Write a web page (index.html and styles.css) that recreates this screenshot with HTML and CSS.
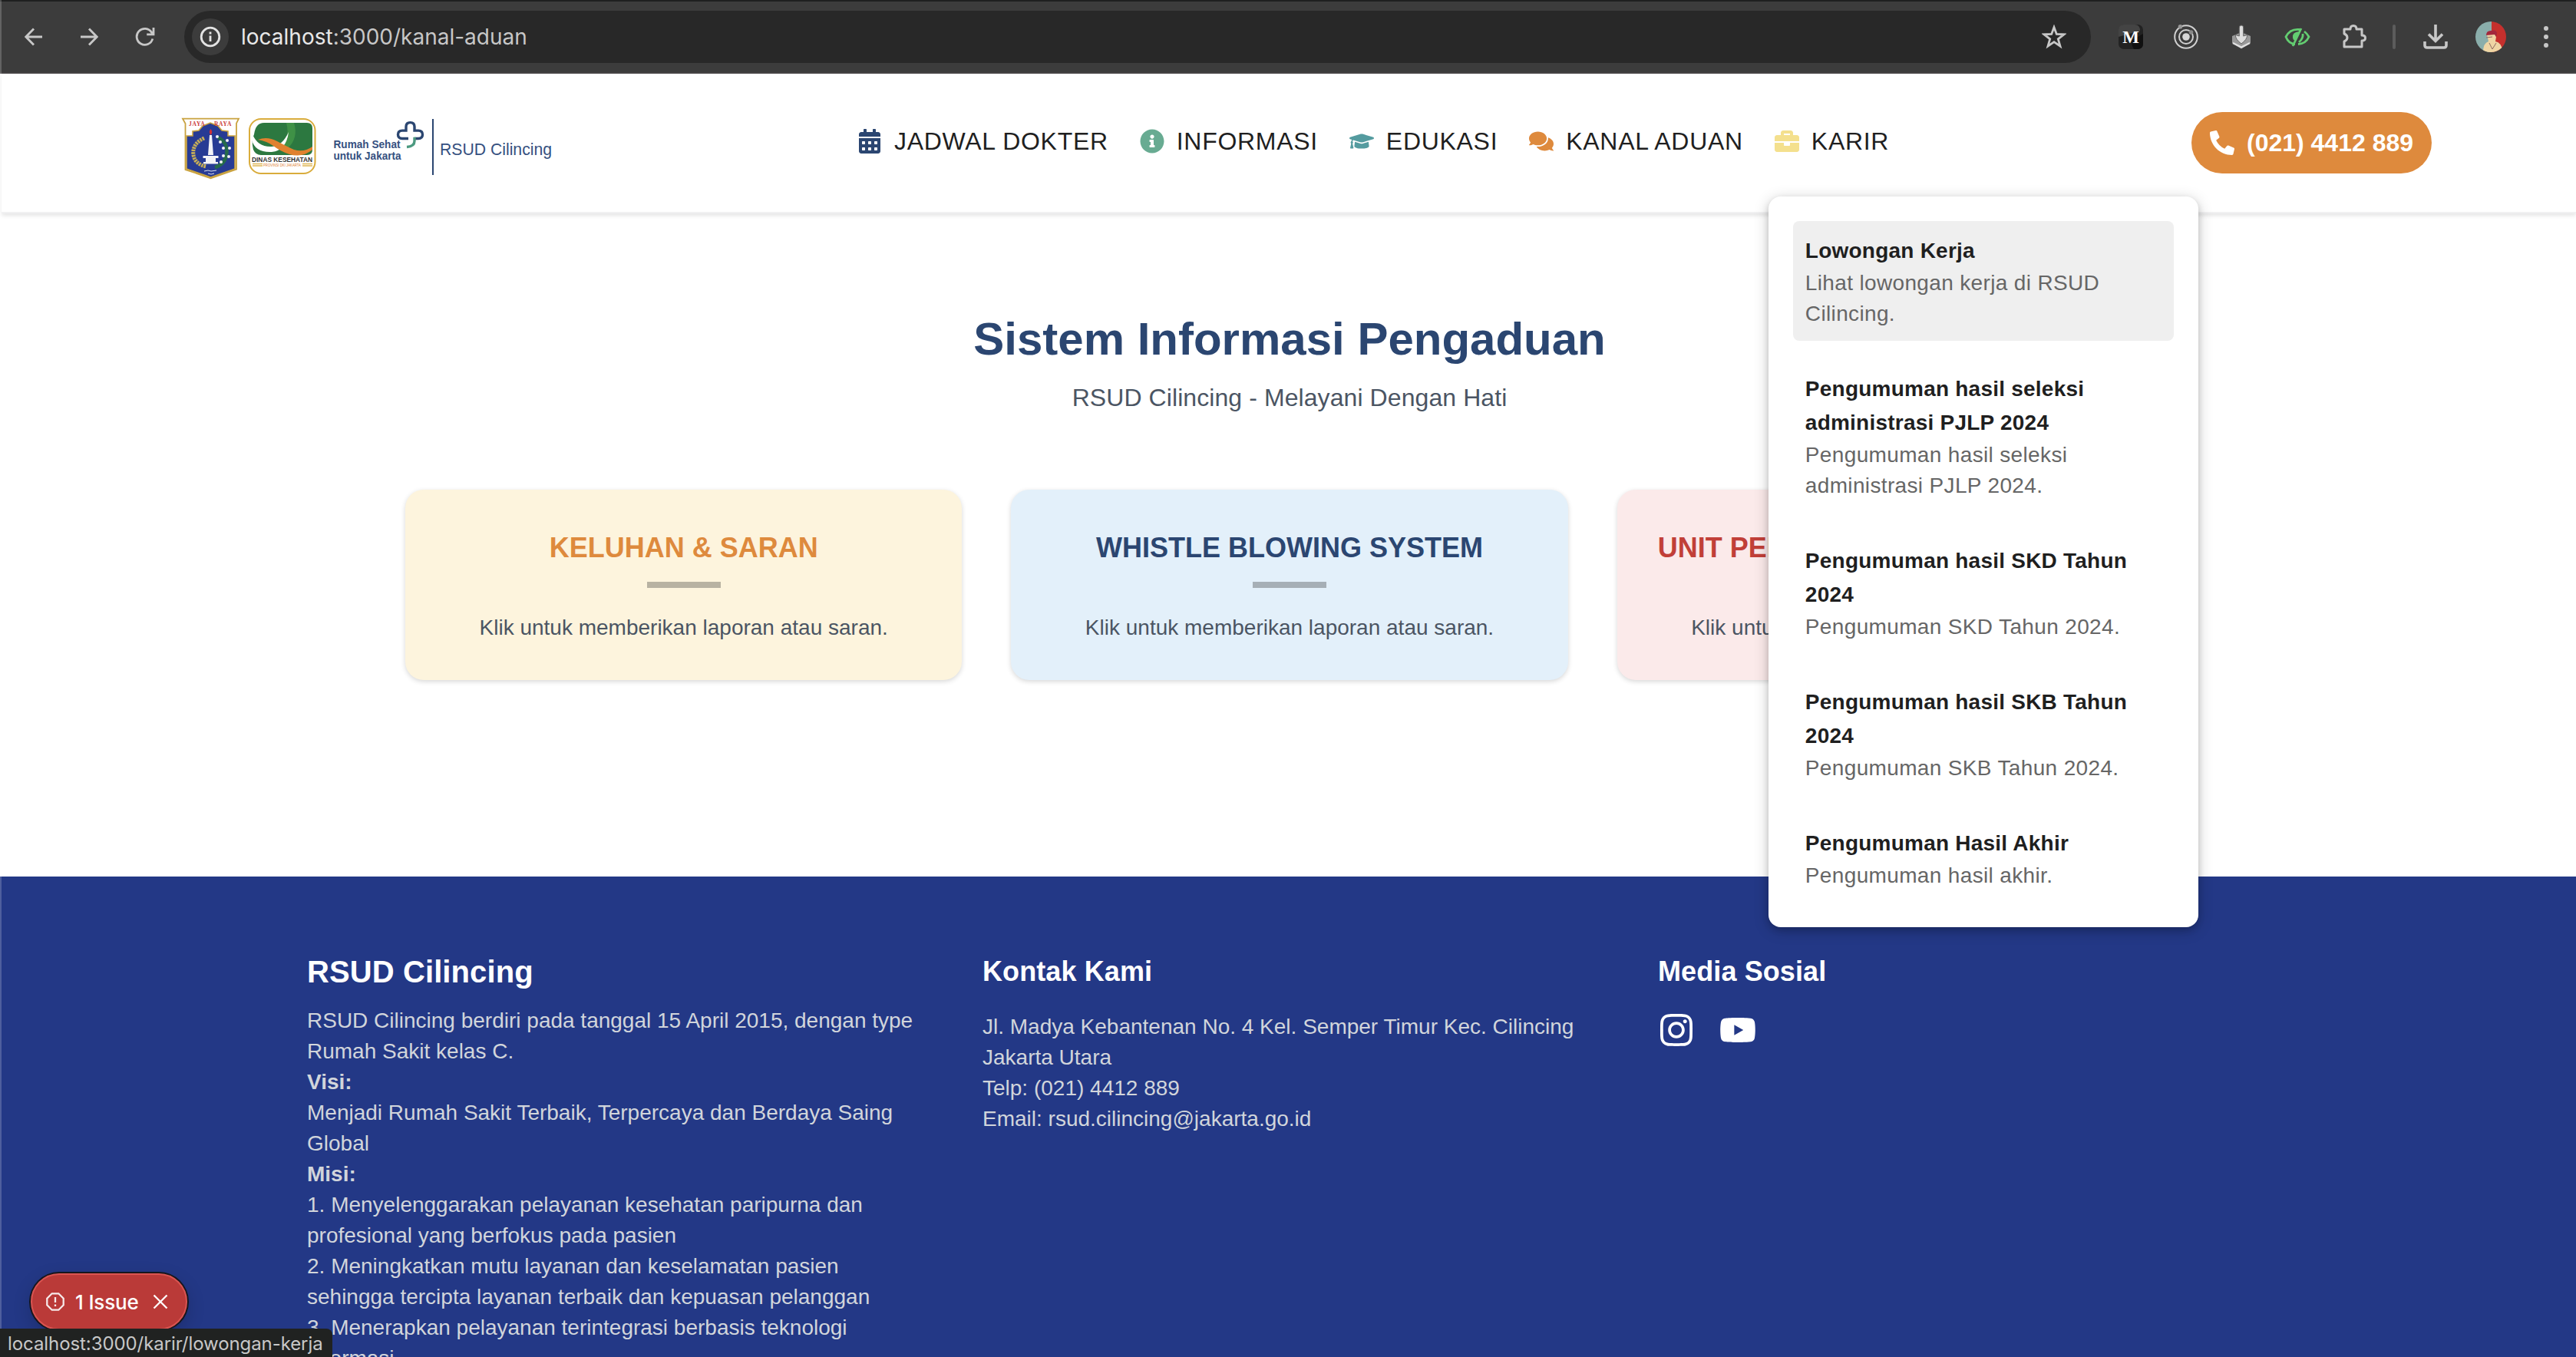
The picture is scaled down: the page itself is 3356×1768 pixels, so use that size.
FILE: index.html
```html
<!DOCTYPE html>
<html lang="id">
<head>
<meta charset="utf-8">
<title>RSUD Cilincing</title>
<link rel="stylesheet" href="styles.css">
</head>
<body>
<div class="toolbar">
  <div class="nav-buttons">
    <svg width="24" height="24" viewBox="0 0 24 24" class="line"><path d="M23 12H2M12 1.500 1.800 12 12 22.500"/></svg>
    <svg width="24" height="24" viewBox="0 0 24 24" class="line"><path d="M1 12h21M12 1.500 22.200 12 12 22.500"/></svg>
    <svg width="26" height="26" viewBox="0 0 26 26" class="line"><path d="M22.800 15.500A10.500 10.500 0 1 1 21.500 7.200L23.500 9.300M24 1v8.800h-8.800"/></svg>
  </div>
  <div class="omnibox">
    <span class="site-info"><svg width="28" height="28" viewBox="0 0 28 28" class="line"><circle cx="14" cy="14" r="11.800"/><path d="M14 12.500v7.500M14 7.500v3"/></svg></span>
    <span class="url"><b>localhost</b>:3000/kanal-aduan</span>
    <svg class="line star" width="32" height="32" viewBox="0 0 32 32"><path d="m16 3.500 3.300 9 9.600.3-7.600 6 2.700 9.300-8-5.400-8 5.400 2.700-9.300-7.600-6 9.600-.3z"/></svg>
  </div>
  <div class="extensions">
    <svg width="32" height="32" viewBox="0 0 32 32"><rect width="32" height="32" rx="7" fill="#222"/><path d="M7 0h14q7 0 7 8L0 16V7q0-7 7-7z" fill="#444"/><path d="M18 20c6-3 10-6 14-8v13q0 7-7 7h-5q-4-6-2-12z" fill="#111"/><text x="16" y="24" text-anchor="middle" class="m-letter">M</text></svg>
    <svg width="32" height="32" viewBox="0 0 32 32" fill="none" stroke="#d0d0d0" stroke-width="2"><circle cx="16" cy="16" r="14.800"/><circle cx="16" cy="16" r="9"/><circle cx="16" cy="16" r="4.800" fill="#d8d8d8" stroke="none"/><circle cx="8.500" cy="2.800" r="2.800" fill="#999" stroke="none"/><circle cx="22.500" cy="10" r="2.800" fill="#888" stroke="none"/></svg>
    <svg width="32" height="32" viewBox="0 0 32 32"><path d="m4 15 12-5 12 5v9l-12 7.500L4 24z" fill="#999"/><path d="m5 24 11 5.500L27 24" stroke="#e0e0e0" stroke-width="2.500" fill="none"/><path d="M13.300 4q0-3 2.700-3t2.700 3v11l5-1.500q0 6-7.700 11.500-7.700-5.500-7.700-11.500l5 1.500z" fill="#ddd" stroke="#666"/></svg>
    <svg width="34" height="26" viewBox="0 0 34 26" fill="none" stroke="#63cd71" stroke-width="2.800"><path d="M14 22.500C8 22 4 18 2 13 6 5 12 2.500 20 3.500M26 6q4 3 6 7-4 9-14 9.500M22 2 11 25M24 9q1 6-5 11"/><path d="M19 6q-9 1-8 8 1 5 4 3z" fill="#63cd71" stroke="none"/></svg>
    <svg width="34" height="34" viewBox="0 0 34 34" fill="none" stroke="#c7c7c7" stroke-width="3" stroke-linejoin="round"><path d="M4 7h8q0-4.500 4-4.500T20 7h7v8q4.500 0 4.500 3.500T27 22v8H4v-7q4-1.500 4-5t-4-5z"/></svg>
    <i class="separator"></i>
    <svg width="32" height="32" viewBox="0 0 32 32" fill="none" stroke="#c7c7c7" stroke-width="3.600"><path d="M16 0v20M7 12.500l9 9 9-9M2 22v5q0 3 3 3h22q3 0 3-3v-5"/></svg>
    <svg class="avatar" width="40" height="40" viewBox="0 0 40 40"><defs><clipPath id="avatar"><circle cx="20" cy="20" r="20"/></clipPath></defs><g clip-path="url(#avatar)"><path fill="#8aaeab" d="M0 0h21v40H0z"/><path fill="#c5302d" d="M21 0h19v40H21z"/><path fill="#efd5a4" d="M10 40q0-12 7-14l-2-9q2-5 9-3l3 6-1 6q8 1 10 14z"/><path fill="#a3283c" d="M14 18q0-6 6-6 8-2 8 4l-1 4-2-3z"/><path stroke="#8f6b60" d="m14 21 8-1M18 28l4 8 5-8" fill="none"/></g></svg>
    <svg class="more" width="8" height="32" viewBox="0 0 8 32" fill="#c7c7c7"><circle cx="4" cy="5" r="3"/><circle cx="4" cy="16" r="3"/><circle cx="4" cy="27" r="3"/></svg>
  </div>
</div>

<header class="site-header">
  <svg class="logo" width="490" height="88" viewBox="235 150 490 88">
    <g>
      <path d="M238 154.700h73l-3 6v60l-33.500 11.500L241.500 221v-60z" fill="#fff" stroke="#c9a23f" stroke-width="1.800"/>
      <path d="M243 177h8v-6l8-1 5-6 10-4 10 4 5 6 8 1v6h9v43l-31.500 11L243 220z" fill="#273b94" stroke="#c9a23f" stroke-width="1.600"/>
      <text x="246" y="163.500" class="crest-text">JAYA</text><text x="279" y="163.500" class="crest-text">RAYA</text>
      <path d="M273 176h3l2 26h-7zM264.500 203h20v3h-20zM268 206h13v5h-13zM265 211h19v2.500h-19z" fill="#f3f3f7"/>
      <path d="M274.500 168q3.500 4 0 8-3.500-4 0-8z" fill="#cf3037"/>
      <path d="M266 180q-16 7-14 22 2 12 17 15" fill="none" stroke="#c9b057" stroke-width="5" stroke-dasharray="2.500 1"/>
      <path d="M284 179q14 7 11 23-2 12-15 16" fill="none" stroke="#266b4b" stroke-width="4.500"/>
      <g fill="#f3f3f7"><circle cx="283" cy="178" r="2"/><circle cx="287" cy="185" r="2"/><circle cx="296" cy="183" r="2"/><circle cx="291" cy="193" r="2"/><circle cx="299" cy="193" r="2"/><circle cx="291" cy="203" r="2"/><circle cx="298" cy="204" r="2"/><circle cx="288" cy="211" r="2"/></g>
      <path d="m266 223 5-1 4 1 7-1m-11 4 4 1 4-1" stroke="#dfe2f0" fill="none"/>
    </g>
    <g>
      <rect x="325" y="155" width="85.500" height="71" rx="15" fill="#fff" stroke="#d9ac3c" stroke-width="2"/>
      <path d="M344 160h56q7 0 7 7v28q0 7-7 7h-60q-7 0-10-7-3-12 1-20 2-15 13-15z" fill="#2c7840"/>
      <path d="M373 160h10q6 20-8 33l-13 3q17-14 11-36z" fill="#3f9146"/>
      <path d="M329 175q7 17 25 16 14-1 22-19-3 24-22 26-22 1-26-16z" fill="#fff"/>
      <path d="M336 182q12-5 25 2t22 11q13 4 24-4v4q-13 11-30 6-12-4-21-11-8-6-20-8z" fill="#e0812f"/>
      <text x="328" y="211" textLength="79" lengthAdjust="spacingAndGlyphs" class="dinas">DINAS KESEHATAN</text>
      <path d="M329 213.500h13m-13 2.500h13m52-2.500h13m-13 2.500h13" stroke="#dfb658" stroke-width="1.300"/>
      <text x="343" y="217" textLength="49" lengthAdjust="spacingAndGlyphs" class="provinsi">PROVINSI DKI JAKARTA</text>
    </g>
    <text x="434.500" y="193" textLength="87" lengthAdjust="spacingAndGlyphs" class="slogan">Rumah Sehat</text>
    <text x="434.500" y="208" textLength="88" lengthAdjust="spacingAndGlyphs" class="slogan">untuk Jakarta</text>
    <path d="M532 180.500h-8q-5.500 0-5.500-5.200t5.500-5.200h5v-5q0-5.500 5.500-5.500t5.500 5.500v5h5q5.500 0 5.500 5.200t-5.500 5.200h-5" fill="none" stroke="#2b4671" stroke-width="3.400"/>
    <path d="M540 178.800v5q0 7-10 7.700" fill="none" stroke="#4c9a80" stroke-width="3.400"/>
    <path d="M564 155v73" stroke="#2b4671" stroke-width="2"/>
    <text x="573" y="201.700" textLength="146" lengthAdjust="spacingAndGlyphs" class="hospital">RSUD Cilincing</text>
  </svg>

  <nav class="menu">
    <a class="menu-item"><svg class="icon navy" viewBox="0 0 448 512"><path fill-rule="evenodd" d="M0 464c0 26.500 21.500 48 48 48h352c26.500 0 48-21.500 48-48V192H0zM64 268q0-12 12-12h40q12 0 12 12v40q0 12-12 12H76q-12 0-12-12zM192 268q0-12 12-12h40q12 0 12 12v40q0 12-12 12h-40q-12 0-12-12zM320 268q0-12 12-12h40q12 0 12 12v40q0 12-12 12h-40q-12 0-12-12zM64 396q0-12 12-12h40q12 0 12 12v40q0 12-12 12H76q-12 0-12-12zM192 396q0-12 12-12h40q12 0 12 12v40q0 12-12 12h-40q-12 0-12-12zM320 396q0-12 12-12h40q12 0 12 12v40q0 12-12 12h-40q-12 0-12-12z"/><path d="M400 64h-48V16c0-8.800-7.200-16-16-16h-32c-8.800 0-16 7.200-16 16v48H160V16c0-8.800-7.200-16-16-16h-32c-8.800 0-16 7.200-16 16v48H48C21.500 64 0 85.500 0 112v48h448v-48c0-26.500-21.500-48-48-48z"/></svg>JADWAL DOKTER</a>
    <a class="menu-item"><svg class="icon green" viewBox="0 0 512 512"><path d="M256 8C119.043 8 8 119.083 8 256c0 136.997 111.043 248 248 248s248-111.003 248-248C504 119.083 392.957 8 256 8zm0 110c23.196 0 42 18.804 42 42s-18.804 42-42 42-42-18.804-42-42 18.804-42 42-42zm56 254c0 6.627-5.373 12-12 12h-88c-6.627 0-12-5.373-12-12v-24c0-6.627 5.373-12 12-12h12v-64h-12c-6.627 0-12-5.373-12-12v-24c0-6.627 5.373-12 12-12h64c6.627 0 12 5.373 12 12v100h12c6.627 0 12 5.373 12 12v24z"/></svg>INFORMASI</a>
    <a class="menu-item"><svg class="icon teal" viewBox="0 0 640 512"><path d="M622.340 153.200L343.400 67.500c-15.200-4.670-31.600-4.670-46.790 0L17.660 153.200c-23.540 7.230-23.540 38.360 0 45.590l48.630 14.940c-10.670 13.190-17.230 29.280-17.880 46.900C38.780 266.150 32 276.110 32 288c0 10.780 5.680 19.850 13.860 25.650L20.330 428.530C18.110 438.520 25.710 448 35.940 448h56.110c10.240 0 17.840-9.480 15.620-19.470L82.140 313.650C90.320 307.850 96 298.780 96 288c0-11.570-6.470-21.250-15.660-26.870.76-15.020 8.440-28.300 20.690-36.720L296.600 284.500c9.060 2.780 26.440 6.250 46.790 0l278.950-85.700c23.550-7.240 23.550-38.360 0-45.600zM352.790 315.090c-28.530 8.760-52.840 3.920-65.590 0l-145.020-44.550L128 384c0 35.350 85.960 64 192 64s192-28.650 192-64l-14.180-113.470-145.030 44.560z"/></svg>EDUKASI</a>
    <a class="menu-item"><svg class="icon orange" viewBox="0 0 576 512"><path d="M416 192c0-88.400-93.100-160-208-160S0 103.600 0 192c0 34.300 14.100 65.900 38 92-13.400 30.200-35.500 54.200-35.800 54.500-2.200 2.300-2.800 5.700-1.500 8.700S4.800 352 8 352c36.600 0 66.900-12.300 88.700-25 32.200 15.700 70.300 25 111.300 25 114.900 0 208-71.600 208-160zm122 220c23.900-26 38-57.700 38-92 0-66.900-53.500-124.200-129.300-148.100.9 6.600 1.300 13.300 1.300 20.100 0 105.900-107.700 192-240 192-10.800 0-21.300-.8-31.700-1.900C207.800 439.600 281.800 480 368 480c41 0 79.100-9.200 111.300-25 21.800 12.700 52.100 25 88.700 25 3.200 0 6.100-1.900 7.300-4.800 1.300-2.900.7-6.300-1.500-8.700-.3-.3-22.400-24.200-35.800-54.500z"/></svg>KANAL ADUAN</a>
    <div class="menu-item"><svg class="icon yellow" viewBox="0 0 512 512"><path d="M320 336c0 8.840-7.160 16-16 16h-96c-8.840 0-16-7.160-16-16v-48H0v144c0 25.600 22.400 48 48 48h416c25.600 0 48-22.400 48-48V288H320v48zm144-208h-80V80c0-25.600-22.400-48-48-48H176c-25.600 0-48 22.400-48 48v48H48c-25.600 0-48 22.400-48 48v80h512v-80c0-25.600-22.400-48-48-48zm-144 0H192V96h128v32z"/></svg>KARIR
      <div class="dropdown">
        <a class="entry active"><strong>Lowongan Kerja</strong><span>Lihat lowongan kerja di RSUD Cilincing.</span></a>
        <a class="entry"><strong>Pengumuman hasil seleksi administrasi PJLP 2024</strong><span>Pengumuman hasil seleksi administrasi PJLP 2024.</span></a>
        <a class="entry"><strong>Pengumuman hasil SKD Tahun 2024</strong><span>Pengumuman SKD Tahun 2024.</span></a>
        <a class="entry"><strong>Pengumuman hasil SKB Tahun 2024</strong><span>Pengumuman SKB Tahun 2024.</span></a>
        <a class="entry"><strong>Pengumuman Hasil Akhir</strong><span>Pengumuman hasil akhir.</span></a>
      </div>
    </div>
  </nav>

  <a class="phone"><svg class="icon" viewBox="0 0 512 512"><path d="M497.390 361.800l-112-48a24 24 0 0 0-28 6.900l-49.600 60.600A370.660 370.660 0 0 1 130.600 204.110l60.600-49.600a23.940 23.940 0 0 0 6.900-28l-48-112A24.160 24.160 0 0 0 122.600.61l-104 24A24 24 0 0 0 0 48c0 256.500 207.900 464 464 464a24 24 0 0 0 23.400-18.600l24-104a24.290 24.290 0 0 0-14.010-27.600z"/></svg>(021) 4412 889</a>
</header>

<main class="main">
  <h1>Sistem Informasi Pengaduan</h1>
  <p class="subtitle">RSUD Cilincing - Melayani Dengan Hati</p>
  <div class="cards">
    <a class="card cream"><h2>KELUHAN &amp; SARAN</h2><i class="bar"></i><p>Klik untuk memberikan laporan atau saran.</p></a>
    <a class="card sky"><h2>WHISTLE BLOWING SYSTEM</h2><i class="bar"></i><p>Klik untuk memberikan laporan atau saran.</p></a>
    <a class="card rose"><h2>UNIT PENGENDALIAN GRATIFIKASI</h2><i class="bar"></i><p>Klik untuk memberikan laporan atau saran.</p></a>
  </div>
</main>

<footer class="footer">
  <div class="footer-grid">
    <section>
      <h2>RSUD Cilincing</h2>
      <p>RSUD Cilincing berdiri pada tanggal 15 April 2015, dengan type Rumah Sakit kelas C.</p>
      <p><b>Visi:</b></p>
      <p>Menjadi Rumah Sakit Terbaik, Terpercaya dan Berdaya Saing Global</p>
      <p><b>Misi:</b></p>
      <p>1. Menyelenggarakan pelayanan kesehatan paripurna dan profesional yang berfokus pada pasien</p>
      <p>2. Meningkatkan mutu layanan dan keselamatan pasien sehingga tercipta layanan terbaik dan kepuasan pelanggan</p>
      <p>3. Menerapkan pelayanan terintegrasi berbasis teknologi informasi</p>
    </section>
    <section>
      <h3>Kontak Kami</h3>
      <p>Jl. Madya Kebantenan No. 4 Kel. Semper Timur Kec. Cilincing Jakarta Utara</p>
      <p>Telp: (021) 4412 889</p>
      <p>Email: rsud.cilincing@jakarta.go.id</p>
    </section>
    <section>
      <h3>Media Sosial</h3>
      <div class="social">
        <svg viewBox="0 0 448 512"><path d="M224.100 141c-63.600 0-114.900 51.300-114.900 114.900s51.300 114.900 114.900 114.900S339 319.500 339 255.900 287.700 141 224.100 141zm0 189.600c-41.100 0-74.700-33.500-74.700-74.700s33.500-74.700 74.700-74.700 74.700 33.500 74.700 74.700-33.600 74.700-74.700 74.700zm146.400-194.300c0 14.900-12 26.800-26.800 26.800-14.900 0-26.800-12-26.800-26.800s12-26.800 26.800-26.800 26.800 12 26.800 26.800zm76.100 27.200c-1.700-35.900-9.900-67.700-36.200-93.900-26.200-26.200-58-34.400-93.900-36.200-37-2.100-147.900-2.100-184.900 0-35.800 1.700-67.600 9.900-93.900 36.100s-34.400 58-36.200 93.900c-2.100 37-2.100 147.900 0 184.900 1.700 35.900 9.900 67.700 36.200 93.900s58 34.400 93.900 36.200c37 2.100 147.900 2.100 184.900 0 35.900-1.700 67.700-9.900 93.900-36.200 26.200-26.200 34.400-58 36.200-93.900 2.100-37 2.100-147.800 0-184.800zM398.800 388c-7.800 19.600-22.900 34.700-42.600 42.600-29.500 11.700-99.500 9-132.100 9s-102.700 2.600-132.100-9c-19.600-7.800-34.700-22.900-42.600-42.600-11.700-29.500-9-99.500-9-132.100s-2.600-102.700 9-132.100c7.800-19.600 22.900-34.700 42.600-42.600 29.500-11.700 99.500-9 132.100-9s102.700-2.600 132.100 9c19.600 7.800 34.700 22.900 42.600 42.600 11.700 29.500 9 99.500 9 132.100s2.700 102.700-9 132.100z"/></svg>
        <svg viewBox="0 0 576 512"><path d="M549.655 124.083c-6.281-23.650-24.787-42.276-48.284-48.597C458.781 64 288 64 288 64S117.220 64 74.629 75.486c-23.497 6.322-42.003 24.947-48.284 48.597-11.412 42.867-11.412 132.305-11.412 132.305s0 89.438 11.412 132.305c6.281 23.650 24.787 41.500 48.284 47.821C117.220 448 288 448 288 448s170.780 0 213.371-11.486c23.497-6.321 42.003-24.171 48.284-47.821 11.412-42.867 11.412-132.305 11.412-132.305s0-89.438-11.412-132.305zm-317.510 213.508V175.185l142.739 81.205-142.739 81.201z"/></svg>
      </div>
    </section>
  </div>
</footer>

<div class="issue">
  <svg width="24" height="24" viewBox="0 0 24 24" fill="none" stroke="#f6e9e9" stroke-width="2.300"><path d="M7.700 1.300h8.600l6.400 6.400v8.600l-6.400 6.400H7.700l-6.400-6.400V7.700zM12 6v7M12 15.500v2.500"/></svg>
  <span>1 Issue</span>
  <svg width="20" height="20" viewBox="0 0 20 20" stroke="#fff" stroke-width="2.300"><path d="m1.500 1.500 17 17m0-17-17 17"/></svg>
</div>
<div class="status">localhost:3000/karir/lowongan-kerja</div>
</body>
</html>
```
FILE: styles.css
```css
* { box-sizing: border-box; margin: 0; padding: 0; }
body {
  width: 3356px; height: 1768px; overflow: hidden; padding-left: 2px;
  background: #fff; position: relative;
  display: flex; flex-direction: column;
  font-family: "Liberation Sans", Arial, sans-serif; font-size: 28px; line-height: 40px;
}
/* Window edge along the left side */
body::before { content: ""; position: absolute; left: 0; top: 0; width: 2px; height: 100%; background: rgba(255, 255, 255, .2); z-index: 9; }
svg { display: block; flex: none; }

/* Browser toolbar */
.toolbar {
  margin-left: -2px; height: 96px; flex: none; padding-left: 32px; background: #3c3c3c;
  border-bottom: 2px solid #464445; border-top: 2px solid #1f2020;
  display: flex; align-items: center;
}
.line { fill: none; stroke: #c7c7c7; stroke-width: 2.8; }
.nav-buttons { display: flex; align-items: center; gap: 48px; width: 208px; }
.omnibox {
  width: 2484px; height: 68px; border-radius: 34px; background: #282828;
  display: flex; align-items: center; padding: 0 32px 0 10px;
}
.site-info { width: 48px; height: 48px; border-radius: 50%; background: #3c3c3c; display: flex; align-items: center; justify-content: center; }
.site-info .line { stroke: #e3e3e3; }
.url { margin-left: 16px; font-family: Inter, sans-serif; color: #c7c7c7; }
.url b { font-weight: 400; color: #e8e8e8; }
.star { margin-left: auto; }
.extensions { display: flex; align-items: center; gap: 40px; margin-left: 36px; }
.separator { width: 4px; height: 32px; margin: 0 -4px 0 -7px; border-radius: 2px; background: #5c5c5c; }
.avatar { margin-left: -4px; }
.more { margin-left: 8px; }
.m-letter { font: bold 23px "Liberation Serif", serif; fill: #fff; }

/* Site header */
.site-header {
  height: 182px; flex: none; padding: 0 188px 0 233px; background: #fff; position: relative; z-index: 2;
  border-bottom: 2px solid #f1f1f2; box-shadow: 0 3px 5px rgba(0, 0, 0, .1);
  display: flex; align-items: center;
}
.logo { margin-top: 16px; margin-right: 392px; }
.crest-text { font: bold 7.5px "Liberation Serif", serif; fill: #cb3b3a; letter-spacing: .7px; }
.dinas { font: bold 9px "Liberation Sans", sans-serif; fill: #333; }
.provinsi { font: 4.5px "Liberation Sans", sans-serif; fill: #e0812f; }
.slogan { font: bold 14.5px "Liberation Sans", sans-serif; fill: #35507f; }
.hospital { font: 22px "Liberation Sans", sans-serif; fill: #35507f; }
.menu { display: flex; gap: 41px; padding-bottom: 4px; }
.menu-item {
  display: flex; align-items: center; gap: 16px; position: relative; white-space: nowrap;
  font-size: 32px; line-height: 48px; letter-spacing: .7px; color: #1f1f1f;
}
.icon { width: 32px; height: 32px; fill: currentColor; }
.navy { color: #2b4671; }
.green { color: #68ab92; }
.teal { color: #549b9f; }
.orange { color: #de8a3d; }
.yellow { color: #f4e08e; }
.phone {
  margin-left: auto; width: 313px; height: 80px; border-radius: 40px; background: #de8a3d; color: #fff;
  display: flex; align-items: center; justify-content: center; gap: 16px; font-size: 32px; font-weight: 700;
}
.dropdown {
  position: absolute; left: -8px; top: 96px; width: 560px; height: 952px; padding: 32px;
  border-radius: 16px; background: #fff; white-space: normal;
  box-shadow: 0 4px 20px rgba(0, 0, 0, .2), 0 4px 8px rgba(0, 0, 0, .16);
  display: flex; flex-direction: column; gap: 24px;
}
.entry { display: flex; flex-direction: column; padding: 17px 16px 15px; border-radius: 8px; font-size: 28px; line-height: 40px; }
.entry.active { background: #efefef; }
.entry strong { line-height: 44px; color: #1f1f1f; letter-spacing: .23px; }
.entry span { color: #666; letter-spacing: .35px; }

/* Complaint channels */
.main { height: 864px; flex: none; padding: 128px 0 0 2px; text-align: center; color: #4b5563; }
.main h1 { font-size: 60px; line-height: 72px; color: #2b4671; margin-bottom: 16px; }
.subtitle { font-size: 32px; line-height: 48px; letter-spacing: .08px; margin-bottom: 96px; }
.cards { width: 2304px; margin: 0 auto; display: grid; grid-template-columns: repeat(3, 1fr); gap: 64px; }
.card {
  height: 248px; padding: 48px 0; border-radius: 24px; box-shadow: 0 2px 6px rgba(0, 0, 0, .16);
  display: flex; flex-direction: column; align-items: center; white-space: nowrap;
}
.card h2 { font-size: 36px; line-height: 56px; }
.bar { width: 96px; height: 8px; margin: 16px 0 32px; background: rgba(17, 17, 17, .29); }
.cream { background: #fdf4dd; } .cream h2 { color: #de8a3d; }
.sky { background: #e3f0fa; } .sky h2 { color: #2b4671; }
.rose { background: #fbeaea; } .rose h2 { color: #c13f38; }

/* Footer */
.footer { flex: 1; min-height: 0; overflow: hidden; margin-left: -2px; padding: 96px 0 0 4px; background: #233886; color: #d1d5db; }
.footer-grid { width: 2560px; margin: 0 auto; display: grid; grid-template-columns: repeat(3, 1fr); gap: 80px; }
.footer h2, .footer h3 { line-height: 56px; color: #fff; }
.footer h2 { font-size: 40px; margin-bottom: 16px; letter-spacing: .1px; }
.footer h3 { font-size: 36px; margin-bottom: 24px; letter-spacing: .1px; }
.social { display: flex; gap: 32px; }
.social svg { width: 48px; height: 48px; fill: #fff; }

/* Overlays */
.issue {
  position: absolute; left: 40px; top: 1659px; width: 204px; height: 74px; border-radius: 37px;
  background: #ba3a38; border: 2px solid #db5451;
  box-shadow: 0 0 0 2px #17161c, 0 8px 24px rgba(0, 0, 0, .2);
  display: flex; align-items: center; padding-left: 18px; color: #fff;
  font: 500 26px Inter, sans-serif; letter-spacing: -.15px;
}
.issue span { margin: 0 18px 0 14px; }
.status {
  position: absolute; left: 0; bottom: 0; width: 433px; height: 37px; padding: 3px 0 0 10px; line-height: 34px;
  border-top-right-radius: 8px; background: #202221; color: #c8c8c8; z-index: 10;
  font-family: Inter, sans-serif; font-size: 24px; letter-spacing: -.08px; white-space: nowrap;
}
```
